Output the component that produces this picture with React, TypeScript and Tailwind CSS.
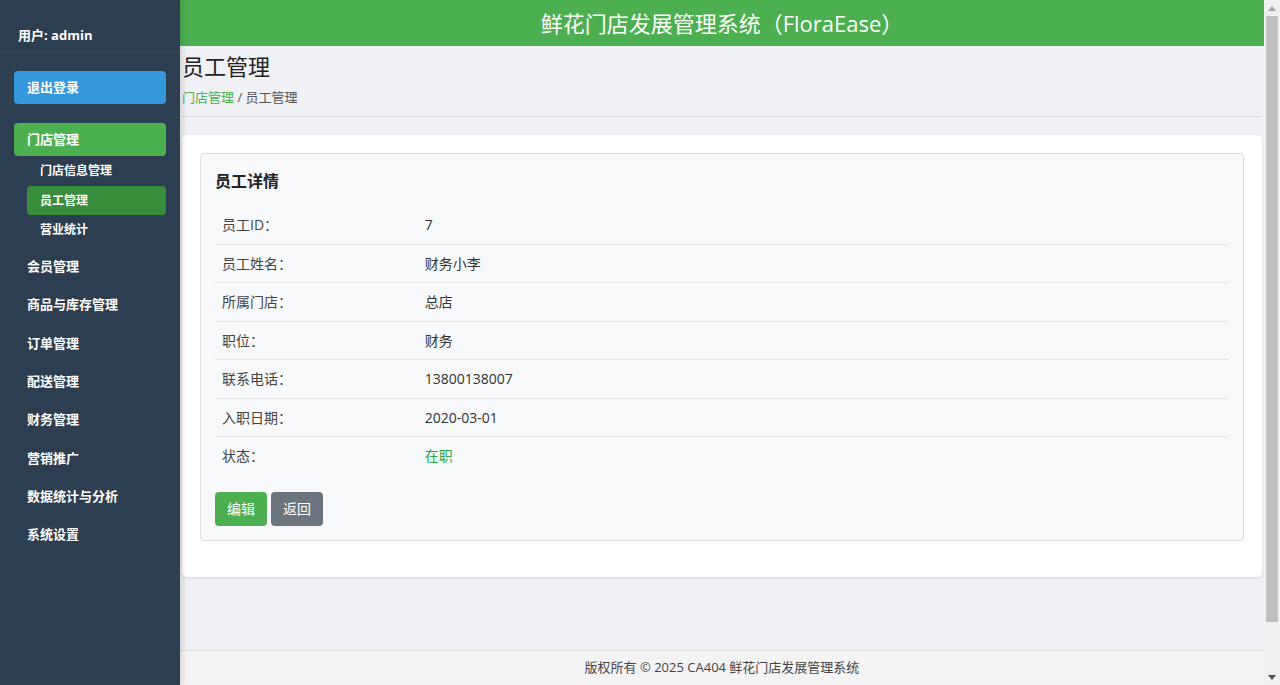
import React from 'react';

const menu = ['会员管理', '商品与库存管理', '订单管理', '配送管理', '财务管理', '营销推广', '数据统计与分析', '系统设置'];

const details: { label: string; value: string; green?: boolean }[] = [
  { label: '员工ID：', value: '7' },
  { label: '员工姓名：', value: '财务小李' },
  { label: '所属门店：', value: '总店' },
  { label: '职位：', value: '财务' },
  { label: '联系电话：', value: '13800138007' },
  { label: '入职日期：', value: '2020-03-01' },
  { label: '状态：', value: '在职', green: true },
];

const Sidebar: React.FC = () => (
  <aside className="relative z-10 h-full w-[180px] shrink-0 bg-[#2c3e50] text-white shadow-[2px_0_6px_rgba(0,0,0,0.15)]">
    <div className="border-b border-[#36495d] px-[18px] pt-[26px] pb-[8px] text-[13px] font-bold leading-[18px]">
      用户: admin
    </div>
    <div className="px-[14px] pt-[18px]">
      <button className="flex h-[33px] w-full items-center rounded-[4px] bg-[#3498db] px-[13px] text-[13px] font-bold">
        退出登录
      </button>
    </div>
    <nav className="mt-[19px] flex flex-col px-[14px]">
      <div className="flex h-[33px] items-center rounded-[4px] bg-[#4caf50] px-[13px] text-[13px] font-bold">门店管理</div>
      <div className="flex flex-col pl-[13px]">
        <div className="flex h-[29px] items-center px-[13px] text-[12px] font-bold">门店信息管理</div>
        <div className="mt-[1px] flex h-[29px] items-center rounded-[4px] bg-[#388e3c] px-[13px] text-[12px] font-bold">员工管理</div>
        <div className="flex h-[29px] items-center px-[13px] text-[12px] font-bold">营业统计</div>
      </div>
      <div className="mt-[6px] flex flex-col gap-[5.4px]">
        {menu.map(m => (
          <div key={m} className="flex h-[33px] items-center px-[13px] text-[13px] font-bold">
            {m}
          </div>
        ))}
      </div>
    </nav>
  </aside>
);

// browser scrollbar as seen in the screenshot
const ScrollBar: React.FC = () => (
  <div className="flex h-full w-[16px] shrink-0 flex-col items-center bg-[#f1f1f1]">
    <div className="flex h-[16px] w-full items-center justify-center">
      <svg width="8" height="5" viewBox="0 0 8 5"><path d="M4 0 L8 5 L0 5 Z" fill="#a3a3a3" /></svg>
    </div>
    <div className="h-[606px] w-[12px] bg-[#c1c1c1]" />
    <div className="flex-1" />
    <div className="flex h-[16px] w-full items-center justify-center">
      <svg width="8" height="5" viewBox="0 0 8 5"><path d="M0 0 L8 0 L4 5 Z" fill="#505050" /></svg>
    </div>
  </div>
);

export default function App() {
  return (
    <div className="flex h-[685px] overflow-hidden bg-[#f0f1f5] font-['Open_Sans','Noto_Sans_CJK_SC',sans-serif] text-[#333]">
      <Sidebar />
      <div className="flex min-w-0 flex-1 flex-col">
        <header className="flex h-[46px] shrink-0 items-center justify-center bg-[#4caf50] text-[22px] text-white">
          鲜花门店发展管理系统（FloraEase）
        </header>

        <main className="flex-1 px-[2px] pt-[5px]">
          <div className="border-b border-[#dcdcdc] pb-[9px]">
            <h2 className="text-[22px] leading-[30px] text-[#222]">员工管理</h2>
            <div className="mt-[6px] text-[13px] leading-[20px] text-[#555]">
              <span className="text-[#4caf50]">门店管理</span> / 员工管理
            </div>
          </div>

          <div className="mt-[18px] rounded-[5px] bg-white p-[18px] pb-[36px] shadow-[0_1px_3px_rgba(0,0,0,0.12)]">
            <div className="rounded-[4px] border border-[#dedede] bg-[#f8f9fa] px-[14px] pt-[14px] pb-[14px]">
              <h3 className="text-[16px] font-bold leading-[26px] text-[#222]">员工详情</h3>
              <table className="mt-[12px] w-full border-collapse text-[14px]">
                <tbody>
                  {details.map((d, i) => (
                    <tr key={d.label} className={i < details.length - 1 ? 'border-b border-[#e6e6e6]' : ''}>
                      <td className="w-[20%] px-[7px] py-[10px] leading-[17.5px] text-[#444]">{d.label}</td>
                      <td className={`px-[7px] py-[10px] leading-[17.5px] ${d.green ? 'text-[#28a745]' : 'text-[#333]'}`}>
                        {d.value}
                      </td>
                    </tr>
                  ))}
                </tbody>
              </table>
              <div className="mt-[17px] flex gap-[4px]">
                <button className="h-[34px] rounded-[4px] bg-[#4caf50] px-[12px] text-[14px] text-white">编辑</button>
                <button className="h-[34px] rounded-[4px] bg-[#6c757d] px-[12px] text-[14px] text-white">返回</button>
              </div>
            </div>
          </div>
        </main>

        <footer className="flex h-[35px] shrink-0 items-center justify-center border-t border-[#dddddd] bg-[#f4f4f4] text-[13px] text-[#444]">
          版权所有 © 2025 CA404 鲜花门店发展管理系统
        </footer>
      </div>
      <ScrollBar />
    </div>
  );
}
